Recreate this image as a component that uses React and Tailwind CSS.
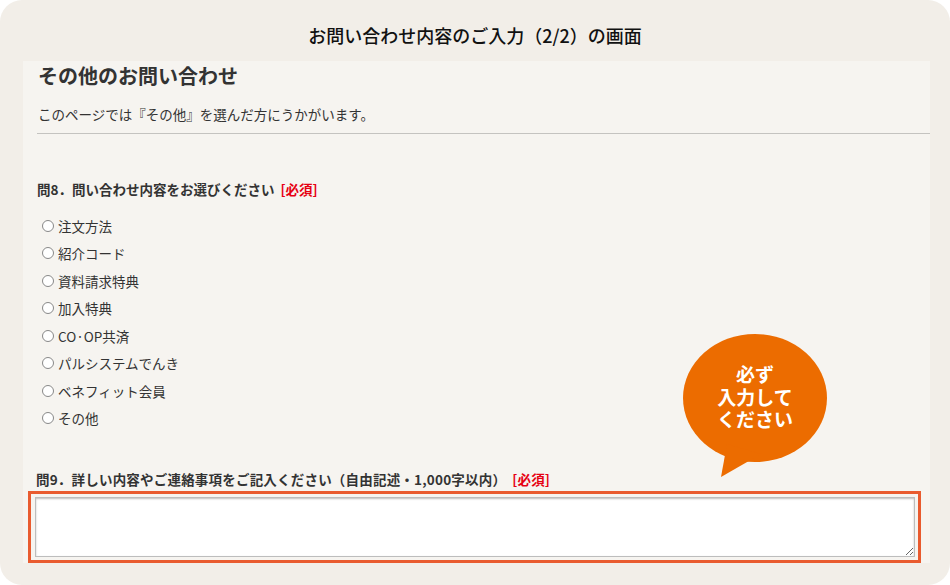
const options = [
  "注文方法",
  "紹介コード",
  "資料請求特典",
  "加入特典",
  "CO·OP共済",
  "パルシステムでんき",
  "ベネフィット会員",
  "その他",
];

function Required() {
  return <span className="ml-[6px] text-[#e60012]">[必須]</span>;
}

function Bubble() {
  return (
    <div className="absolute left-[660px] top-[271px] w-[150px] h-[146px]">
      <svg width="150" height="146" viewBox="0 0 150 146" className="absolute inset-0">
        <ellipse cx="72" cy="66" rx="72" ry="64" fill="#ec6c00" />
        <path d="M44 112 L38 145 L78 122 Z" fill="#ec6c00" />
      </svg>
      <div className="absolute left-0 top-[31px] w-[144px] flex flex-col items-center text-white font-bold text-[19px] leading-[22.5px]">
        <span>必ず</span>
        <span>入力して</span>
        <span>ください</span>
      </div>
    </div>
  );
}

export default function App() {
  return (
    <div
      className="w-[950px] h-[585px] bg-white overflow-hidden"
      style={{ fontFamily: '"Noto Sans CJK JP", "Noto Sans", sans-serif' }}
    >
      <div className="h-full rounded-[22px] bg-[#f2eee8] flex flex-col">
        <h1 className="pt-[24px] h-[61px] text-center text-[18px] leading-[22px] font-medium text-[#111]">
          お問い合わせ内容のご入力（2/2）の画面
        </h1>

        <div className="relative ml-[23px] mr-[20px] mb-[22px] flex-1 bg-[#f6f4f0] flex flex-col text-[#333]">
          <h2 className="pl-[15px] pt-[1px] text-[20px] leading-[28px] font-bold text-[#333]">
            その他のお問い合わせ
          </h2>
          <p className="pl-[15px] mt-[14px] text-[13.5px] leading-[20px]">
            このページでは『その他』を選んだ方にうかがいます。
          </p>
          <div className="ml-[14px] mt-[9px] border-t border-[#c4c3c0]" />

          <p className="pl-[14px] mt-[45px] text-[13.5px] leading-[20px] font-bold">
            問8．問い合わせ内容をお選びください
            <Required />
          </p>

          <ul className="mt-[13px] pl-[19px]">
            {options.map((o) => (
              <li key={o} className="flex items-center h-[27.5px] text-[13.5px]">
                <span className="w-[12px] h-[12px] rounded-full border border-[#888] bg-white mr-[4px]" />
                {o}
              </li>
            ))}
          </ul>

          <p className="pl-[13px] mt-[37px] text-[13.5px] leading-[20px] font-bold tracking-[0.2px]">
            問9．詳しい内容やご連絡事項をご記入ください（自由記述・1,000字以内）
            <Required />
          </p>

          <div className="mt-[2px] ml-[5px] mr-[9px] flex-1 border-[3px] border-[#e95b2f] pt-[3px] pb-[3px] pl-[4px] pr-[3px] flex">
            <textarea className="flex-1 bg-white border border-[#bdbdbd] shadow-[inset_0_1px_2px_rgba(0,0,0,0.25)] outline-none" />
          </div>

          <Bubble />
        </div>
      </div>
    </div>
  );
}
